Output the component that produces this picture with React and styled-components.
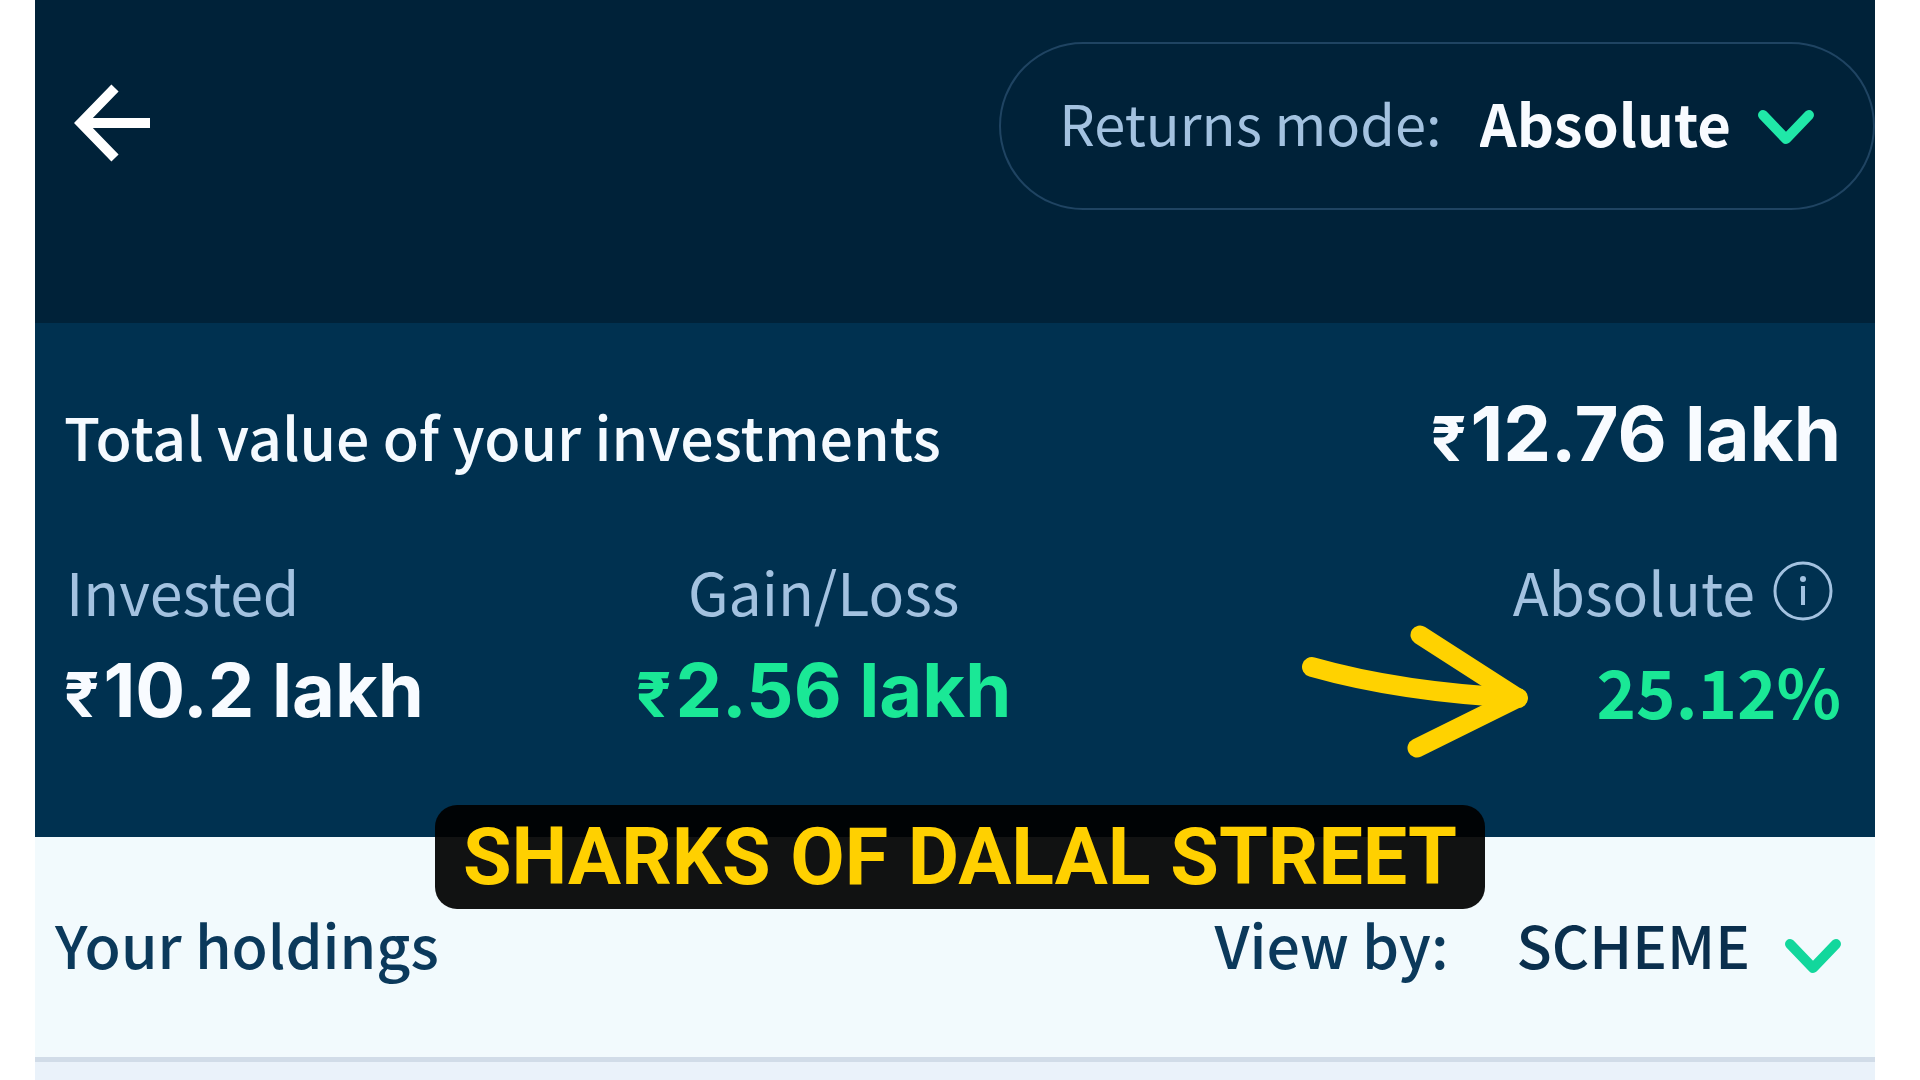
import React, { useState } from 'react';
import styled, { createGlobalStyle } from 'styled-components';

const GlobalStyle = createGlobalStyle`
  * {
    box-sizing: border-box;
  }

  body {
    margin: 0;
    background-color: #ffffff;
    font-family: 'Noto Sans CJK SC', 'Noto Sans', sans-serif;
  }
`;

// Styled components
const Page = styled.div`
  min-height: 100vh;
  padding: 0 45px 0 35px;
  display: flex;
  flex-direction: column;
`;

const Header = styled.header`
  display: flex;
  justify-content: space-between;
  align-items: center;
  padding: 42px 0 113px 36px;
  background-color: #002239;
`;

const BackButton = styled.button`
  display: flex;
  padding: 0 0 6px;
  border: none;
  background: none;
  color: #ffffff;
  cursor: pointer;
`;

const ModePill = styled.div`
  display: flex;
  align-items: center;
  height: 168px;
  padding: 0 58px;
  border: 2px solid #1f4462;
  border-radius: 84px;
`;

const ModeLabel = styled.label`
  margin-right: 38px;
  padding-bottom: 8px;
  font-size: 56px;
  line-height: 80px;
  color: #a3c2e0;
  white-space: nowrap;
`;

const Picker = styled.div`
  display: flex;
  align-items: center;
  gap: ${(props) => props.$gap};
`;

const Select = styled.select`
  appearance: none;
  field-sizing: content;
  padding: 0 0 8px;
  border: none;
  background: none;
  font-family: inherit;
  font-size: 58px;
  font-weight: ${(props) => props.$weight};
  line-height: 80px;
  color: ${(props) => props.$color};
  cursor: pointer;
`;

const ChevronIcon = styled.svg`
  margin-top: ${(props) => props.$drop};
`;

const Summary = styled.section`
  position: relative;
  padding: 70px 34px 107px 29px;
  background-color: #003150;
`;

const TotalRow = styled.div`
  display: flex;
  justify-content: space-between;
  align-items: baseline;
  margin-bottom: 79px;
`;

const TotalLabel = styled.h1`
  margin: 0;
  font-size: 59px;
  font-weight: 500;
  line-height: 80px;
  color: #f5faff;
`;

const Amount = styled.div`
  font-family: ${(props) => (props.$percent ? 'inherit' : "'Inter', sans-serif")};
  font-size: ${(props) => props.$size || '74px'};
  font-weight: 700;
  line-height: 80px;
  color: ${(props) => (props.$gain ? '#1ae896' : '#f8fbff')};
  white-space: nowrap;
`;

const Rupee = styled.span`
  margin-right: 4px;
  font-size: 62px;
  line-height: 1;
`;

const Metrics = styled.div`
  display: grid;
  grid-template-columns: 64fr 43fr 93fr;
`;

const Metric = styled.div`
  display: flex;
  flex-direction: column;
  align-items: ${(props) => props.$align};
  gap: 23px;
`;

const MetricLabel = styled.div`
  display: flex;
  align-items: center;
  gap: 18px;
  padding: 0 2px;
  font-size: 59px;
  line-height: 72px;
  color: #a3c2e0;
`;

const InfoButton = styled.button`
  display: flex;
  margin-right: 6px;
  padding: 0;
  border: none;
  background: none;
  color: inherit;
  cursor: pointer;
`;

// Drawn on top of the summary, pointing at the return figure
const Pointer = styled.svg`
  position: absolute;
  top: 298px;
  right: 343px;
`;

const Holdings = styled.section`
  position: relative;
  display: flex;
  justify-content: space-between;
  align-items: center;
  padding: 67px 33px 65px 20px;
  background-color: #f2fafd;
  border-bottom: 5px solid #d1dce8;
  color: #0b395b;
`;

const HoldingsTitle = styled.h2`
  margin: 0;
  padding-bottom: 8px;
  font-size: 59px;
  font-weight: 500;
  line-height: 80px;
`;

const ViewBy = styled.div`
  display: flex;
  align-items: center;
`;

const ViewLabel = styled.label`
  margin-right: 68px;
  padding-bottom: 8px;
  font-size: 59px;
  font-weight: 500;
  line-height: 80px;
`;

const CaptionRow = styled.div`
  position: absolute;
  top: -32px;
  left: -35px;
  right: -45px;
  display: flex;
  justify-content: center;
  pointer-events: none;
`;

const Caption = styled.div`
  padding: 8px 28px;
  border-radius: 22px;
  background-color: rgba(0, 0, 0, 0.93);
  font-family: 'Roboto', sans-serif;
  font-size: 79px;
  font-weight: 700;
  line-height: 88px;
  color: #ffd000;
  white-space: nowrap;
`;

const ListArea = styled.main`
  flex: 1;
  min-height: 18px;
  background-color: #eaf2fa;
`;

const ArrowLeft = () => (
  <svg width="84" height="84" viewBox="0 0 84 84" fill="none" stroke="currentColor" strokeWidth="10" aria-hidden="true">
    <path d="M10 42H79M44 7L10 42L44 77" />
  </svg>
);

const Chevron = ({ color, drop }) => (
  <ChevronIcon $drop={drop} width="58" height="38" viewBox="0 0 58 38" fill="none" stroke={color} strokeWidth="10" strokeLinecap="round" strokeLinejoin="round" aria-hidden="true">
    <path d="M6 6L29 30L52 6" />
  </ChevronIcon>
);

const InfoIcon = () => (
  <svg width="60" height="60" viewBox="0 0 60 60" fill="none" stroke="currentColor" aria-hidden="true">
    <circle cx="30" cy="30" r="28" strokeWidth="3" />
    <path d="M30 25V44" strokeWidth="4" />
    <circle cx="30" cy="18" r="3" fill="currentColor" stroke="none" />
  </svg>
);

const App = () => {
  const [mode, setMode] = useState('Absolute');
  const [view, setView] = useState('SCHEME');

  return (
    <Page>
      <GlobalStyle />
      <Header>
        <BackButton type="button" aria-label="Back">
          <ArrowLeft />
        </BackButton>
        <ModePill>
          <ModeLabel htmlFor="mode">Returns mode:</ModeLabel>
          <Picker $gap="26px">
            <Select id="mode" $weight={700} $color="#f8fbff" value={mode} onChange={(e) => setMode(e.target.value)}>
              <option>Absolute</option>
            </Select>
            <Chevron color="#20e8a8" drop="4px" />
          </Picker>
        </ModePill>
      </Header>

      <Summary>
        <TotalRow>
          <TotalLabel>Total value of your investments</TotalLabel>
          <Amount $size="76px"><Rupee>₹</Rupee>12.76 lakh</Amount>
        </TotalRow>
        <Metrics>
          <Metric $align="flex-start">
            <MetricLabel>Invested</MetricLabel>
            <Amount><Rupee>₹</Rupee>10.2 lakh</Amount>
          </Metric>
          <Metric $align="center">
            <MetricLabel>Gain/Loss</MetricLabel>
            <Amount $gain><Rupee>₹</Rupee>2.56 lakh</Amount>
          </Metric>
          <Metric $align="flex-end">
            <MetricLabel>
              Absolute
              <InfoButton type="button" aria-label="About absolute returns">
                <InfoIcon />
              </InfoButton>
            </MetricLabel>
            <Amount $gain $percent $size="67px">25.12%</Amount>
          </Metric>
        </Metrics>
        <Pointer width="232" height="140" viewBox="0 0 232 140" fill="none" stroke="#ffd200" strokeLinecap="round" strokeLinejoin="round" aria-hidden="true">
          <path d="M12 46Q100 71 218 77" strokeWidth="20" />
          <path d="M120 14L218 77L117 127" strokeWidth="19" />
        </Pointer>
      </Summary>

      <Holdings>
        <HoldingsTitle>Your holdings</HoldingsTitle>
        <ViewBy>
          <ViewLabel htmlFor="view">View by:</ViewLabel>
          <Picker $gap="34px">
            <Select id="view" $weight={500} $color="#0a2f4d" value={view} onChange={(e) => setView(e.target.value)}>
              <option>SCHEME</option>
            </Select>
            <Chevron color="#12d79c" drop="18px" />
          </Picker>
        </ViewBy>
        <CaptionRow>
          <Caption>SHARKS OF DALAL STREET</Caption>
        </CaptionRow>
      </Holdings>
      <ListArea />
    </Page>
  );
};

export default App;
